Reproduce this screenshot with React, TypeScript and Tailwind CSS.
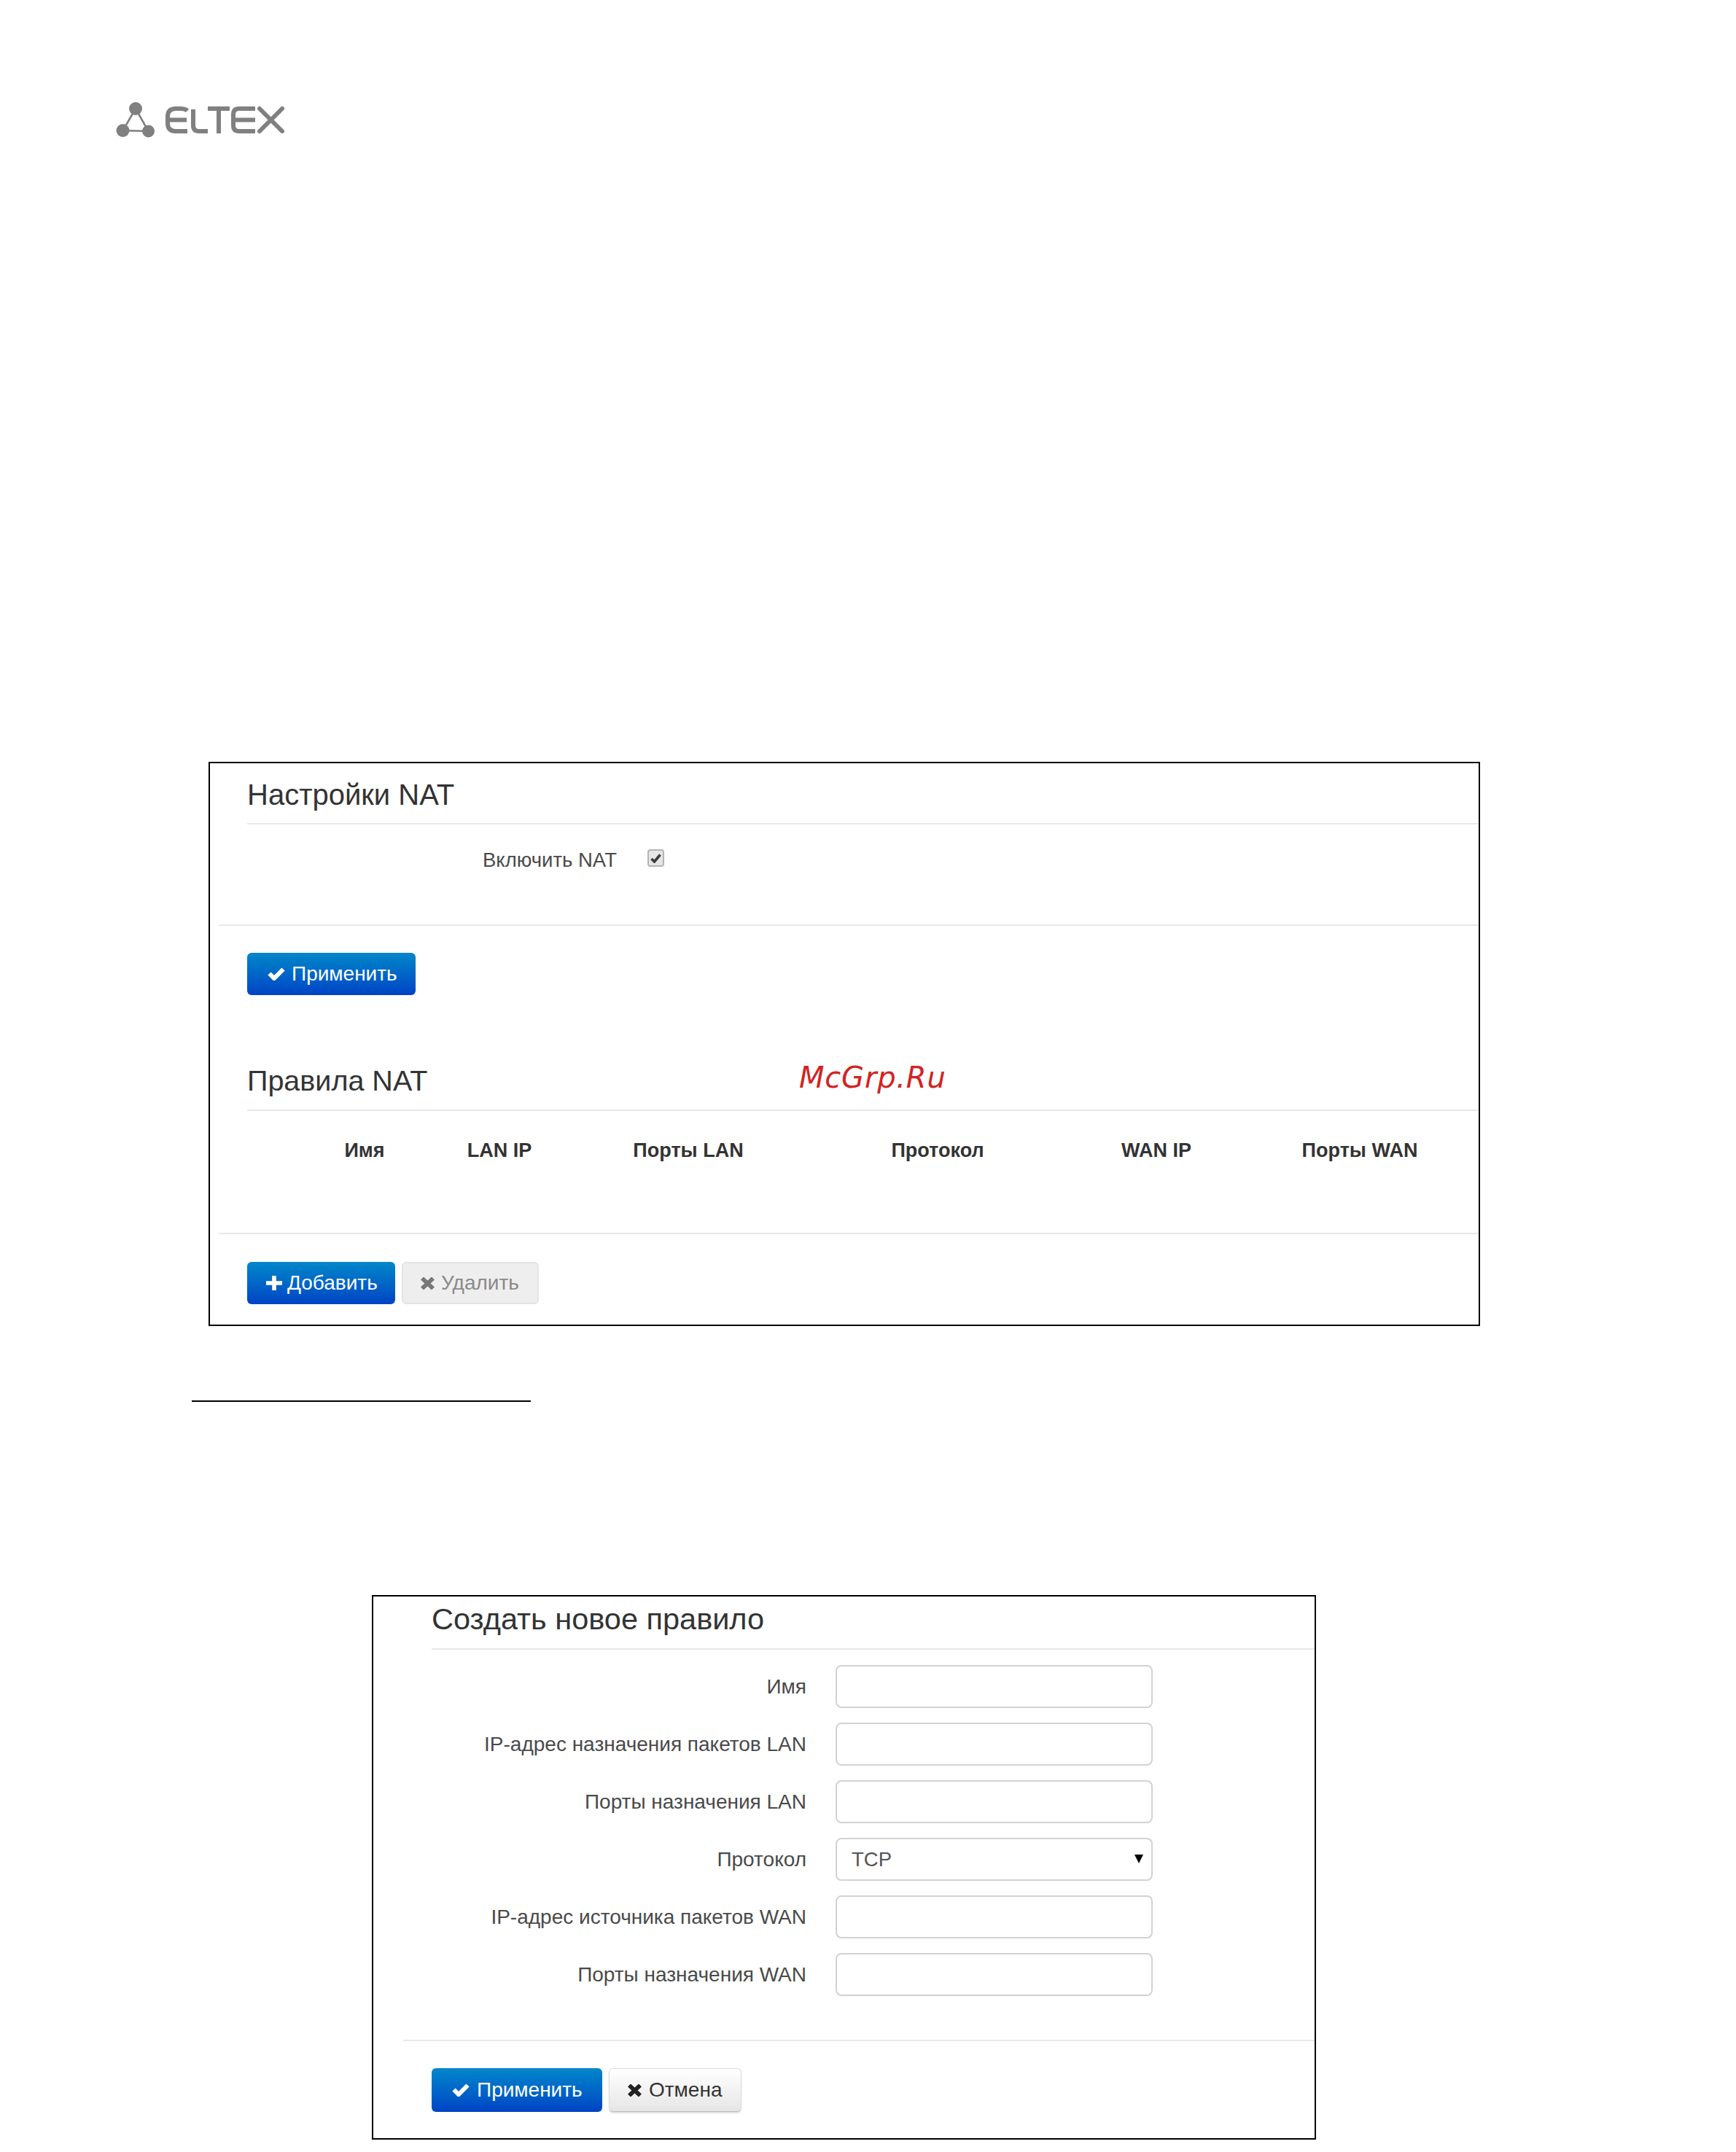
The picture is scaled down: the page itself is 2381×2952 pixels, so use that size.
import React from "react";

const CheckIcon = ({ color = "white" }: { color?: string }) => (
  <svg width="24" height="18" viewBox="0 0 24 18" fill="none" stroke={color} strokeWidth="6" className="shrink-0">
    <path d="M2.5 8.5 L9 15 L21.5 2.5" />
  </svg>
);
const TimesIcon = ({ color }: { color: string }) => (
  <svg width="19" height="17" viewBox="0 0 19 17" fill="none" stroke={color} strokeWidth="5.8" className="shrink-0">
    <path d="M2 1.5 L17 15.5 M17 1.5 L2 15.5" />
  </svg>
);
const PlusIcon = () => (
  <svg width="22" height="20" viewBox="0 0 22 20" fill="none" stroke="white" strokeWidth="5.6" className="shrink-0">
    <path d="M11 0 V20 M0 10 H22" />
  </svg>
);

const Logo = () => (
  <svg width="240" height="50" viewBox="155 140 240 50" className="block">
    <g fill="#808080">
      <circle cx="186" cy="149" r="9" />
      <circle cx="168.5" cy="179" r="9" />
      <circle cx="203.5" cy="180" r="8.5" />
    </g>
    <path d="M186 149 L168.5 179 L203.5 180 Z" fill="none" stroke="#808080" strokeWidth="2.6" />
    <g fill="none" stroke="#808080" strokeWidth="6">
      <path d="M257 152 Q254 149 248 149 H241 Q230 149 230 160 V169 Q230 180 241 180 H257 M230 164.5 H256" />
      <path d="M265 150 V172 Q265 180 273 180 H285" />
      <path d="M285 149 H315 M300 149 V183" />
      <path d="M350 149 H328 Q320 149 320 157 V172 Q320 180 328 180 H350 M320 164.5 H350" />
      <path d="M356 149 L387 180 M387 149 L356 180" strokeLinecap="round" />
    </g>
  </svg>
);

const blue =
  "flex h-[58px] items-center rounded-[6px] bg-gradient-to-b from-[#0a86c9] to-[#0042c4] text-[28px] text-white";

const Field = ({ label, children }: { label: string; children?: React.ReactNode }) => (
  <div className="flex h-[59px] items-center">
    <div className="w-[553px] text-right text-[28px] text-[#4a4a4a]">{label}</div>
    <div className="ml-[40px] h-[59px] w-[435px] rounded-[8px] border-2 border-[#d2d2d2] bg-white">{children}</div>
  </div>
);

export default function App() {
  return (
    <div className="relative h-[2952px] w-[2381px] overflow-hidden bg-white font-['Liberation_Sans',sans-serif]">
      <header className="pl-[155px] pt-[140px]">
        <Logo />
      </header>

      <main className="pl-[286px] pt-[855px]">
        <section className="h-[774px] w-[1744px] border-2 border-black">
          <div className="ml-[51px] h-[84px] border-b-2 border-[#e8e8e8] pt-[19px] text-[40px] leading-[48px] text-[#333]">
            Настройки NAT
          </div>
          <div className="ml-[12px] flex h-[139px] items-start border-b-2 border-[#e8e8e8] pl-[362px] pt-[31px]">
            <span className="text-[27.5px] leading-[36px] text-[#4a4a4a]">Включить NAT</span>
            <span className="ml-[42px] mt-[3px] flex h-[24px] w-[23px] items-center justify-center rounded-[4px] border-2 border-[#b4b4b4] bg-[#e6e6e6]">
              <svg width="15" height="13" viewBox="0 0 15 13" fill="none" stroke="#3c3c3c" strokeWidth="3.6">
                <path d="M1.5 7 L5.5 11 L13.5 1.5" />
              </svg>
            </span>
          </div>
          <div className="pl-[51px] pt-[37px]">
            <button className={`${blue} w-[231px] gap-[9px] pl-[28px]`}>
              <CheckIcon />
              Применить
            </button>
          </div>
          <div className="ml-[51px] mt-[93px] h-[66px] border-b-2 border-[#e8e8e8] text-[39.5px] leading-[48px] text-[#333]">
            Правила NAT
          </div>
          <div className="ml-[12px] grid h-[169px] grid-cols-[130px_140px_230px_288px_396px_204px_340px] items-start border-b-2 border-[#e8e8e8] pt-[36px] text-center text-[27px] font-bold leading-[36px] text-[#333]">
            <span />
            <span>Имя</span>
            <span>LAN IP</span>
            <span>Порты LAN</span>
            <span>Протокол</span>
            <span>WAN IP</span>
            <span className="pl-[14px]">Порты WAN</span>
          </div>
          <div className="flex gap-[9px] pl-[51px] pt-[38px]">
            <button className={`${blue} w-[203px] gap-[7px] pl-[26px]`}>
              <PlusIcon />
              Добавить
            </button>
            <button className="flex h-[58px] w-[188px] items-center gap-[9px] rounded-[6px] border-2 border-[#e4e4e4] bg-[#eeeeee] pl-[24px] text-[28px] text-[#8a8a8a]">
              <TimesIcon color="#777" />
              Удалить
            </button>
          </div>
        </section>

        <div className="ml-[-23px] mt-[102px] h-[2px] w-[465px] bg-black" />

        <section className="ml-[224px] mt-[265px] h-[747px] w-[1295px] border-2 border-black">
          <div className="ml-[80px] h-[73px] border-b-2 border-[#e8e8e8] pt-[7px] text-[41.5px] leading-[48px] text-[#333]">
            Создать новое правило
          </div>
          <div className="ml-[41px] flex h-[537px] flex-col gap-[20px] border-b-2 border-[#e8e8e8] pt-[21px]">
            <Field label="Имя" />
            <Field label="IP-адрес назначения пакетов LAN" />
            <Field label="Порты назначения LAN" />
            <Field label="Протокол">
              <div className="relative flex h-full items-center pl-[20px] text-[27.5px] text-[#555]">
                TCP
                <span className="absolute right-[11px] top-[21px] h-0 w-0 border-x-[6.5px] border-t-[12px] border-x-transparent border-t-black" />
              </div>
            </Field>
            <Field label="IP-адрес источника пакетов WAN" />
            <Field label="Порты назначения WAN" />
          </div>
          <div className="flex gap-[9px] pl-[80px] pt-[37px]">
            <button className={`${blue} !h-[60px] w-[234px] gap-[10px] pl-[28px]`}>
              <CheckIcon />
              Применить
            </button>
            <button className="flex h-[60px] w-[182px] items-center gap-[10px] rounded-[6px] border border-[#dcdcdc] border-b-[#bbb] bg-gradient-to-b from-white to-[#e6e6e6] pl-[25px] text-[28px] text-[#333] shadow-[0_2px_2px_rgba(0,0,0,0.12)]">
              <TimesIcon color="#222" />
              Отмена
            </button>
          </div>
        </section>
      </main>

      <div className="absolute left-[1096px] top-[1454px] font-['DejaVu_Sans',sans-serif] text-[40px] italic leading-[48px] tracking-[0.8px] text-[#d32222]">
        McGrp.Ru
      </div>
    </div>
  );
}
